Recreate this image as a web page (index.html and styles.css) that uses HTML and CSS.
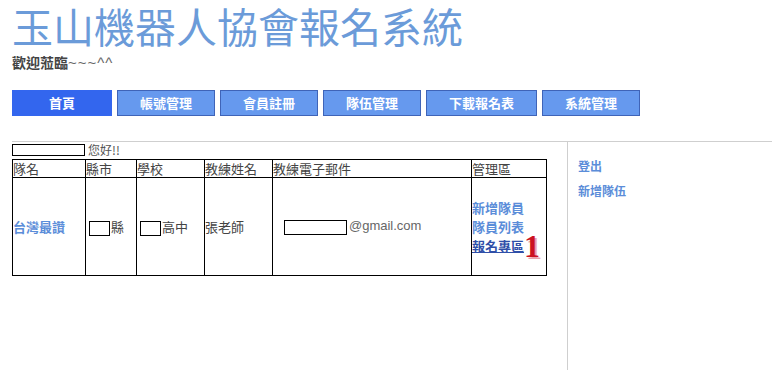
FILE: index.html
```html
<!DOCTYPE html>
<html lang="zh-Hant">
  <head>
    <meta charset="UTF-8" />
    <title>玉山機器人協會報名系統</title>
    <link rel="stylesheet" href="styles.css">
  </head>
  <body>
    <div class="page">
      <h1 class="site-title">玉山機器人協會報名系統</h1>
      <div class="welcome">歡迎蒞臨<span class="tail">~~~^^</span></div>

      <!-- 主選單 -->
      <div class="nav">
        <a class="nav-btn active" href="#">首頁</a>
        <a class="nav-btn" href="#">帳號管理</a>
        <a class="nav-btn" href="#">會員註冊</a>
        <a class="nav-btn" href="#">隊伍管理</a>
        <a class="nav-btn" href="#">下載報名表</a>
        <a class="nav-btn" href="#">系統管理</a>
      </div>

      <div class="content">
        <div class="main">
          <div class="hello"><span class="blank wide"></span>您好!!</div>
          <table class="teams">
            <colgroup>
              <col style="width: 73px" />
              <col style="width: 51px" />
              <col style="width: 68px" />
              <col style="width: 68px" />
              <col style="width: 199px" />
              <col style="width: 75px" />
            </colgroup>
            <tr>
              <th>隊名</th>
              <th>縣市</th>
              <th>學校</th>
              <th>教練姓名</th>
              <th>教練電子郵件</th>
              <th>管理區</th>
            </tr>
            <tr>
              <td class="team-name">台灣最讚</td>
              <td><span class="blank small"></span>縣</td>
              <td><span class="blank small"></span>高中</td>
              <td>張老師</td>
              <td class="email"><span class="blank mail"></span>@gmail.com</td>
              <td class="manage">
                <a href="#">新增隊員</a>
                <a href="#">隊員列表</a>
                <a href="#" class="signup">報名專區</a><span class="badge">1</span>
              </td>
            </tr>
          </table>
        </div>

        <div class="sidebar">
          <a href="#">登出</a>
          <a href="#">新增隊伍</a>
        </div>
      </div>
    </div>
  </body>
</html>
```

FILE: styles.css
```css
body {
  margin: 0;
  background: #fff;
  font-family: "Noto Sans CJK TC", "Liberation Sans", sans-serif;
  color: #333;
}
.page {
  width: 760px;
  padding: 0 10px 0 12px;
}
.site-title {
  margin: 0;
  font-size: 41px;
  line-height: 50px;
  font-weight: normal;
  color: #6b9bd9;
}
.welcome {
  font-size: 14px;
  line-height: 18px;
  font-weight: bold;
  color: #444;
  margin-top: 3px;
}
.welcome .tail {
  font-family: "Liberation Sans", sans-serif;
  font-weight: normal;
  font-size: 15px;
  letter-spacing: 1px;
  color: #666;
}
.nav {
  display: flex;
  gap: 5px;
  margin-top: 18px;
}
.nav-btn {
  display: block;
  height: 24px;
  line-height: 24px;
  padding: 0 22px;
  min-width: 52px;
  text-align: center;
  background: #6699ee;
  border: 1px solid #3f64b8;
  color: #fff;
  font-size: 13px;
  font-weight: bold;
  text-decoration: none;
}
.nav-btn.active {
  background: #3366ee;
  border-color: #3366ee;
  min-width: 54px;
}
.content {
  display: flex;
  margin-top: 25px;
  border-top: 1px solid #cfcfcf;
}
.main {
  width: 555px;
}
.hello {
  margin-top: 2px;
  font-size: 12px;
  line-height: 12px;
  color: #555;
}
.blank {
  display: inline-block;
  border: 1px solid #000;
  background: #fff;
  vertical-align: middle;
}
.blank.wide {
  width: 71px;
  height: 10px;
  margin-right: 3px;
  vertical-align: -1px;
}
.blank.small {
  width: 19px;
  height: 13px;
  margin: 0 1px 0 3px;
}
.blank.mail {
  width: 61px;
  height: 13px;
  margin: 0 2px 0 11px;
}
.teams {
  margin-top: 3px;
  border-collapse: collapse;
  table-layout: fixed;
  width: 534px;
  font-size: 13px;
  color: #444;
}
.teams th,
.teams td {
  border: 1px solid #000;
  padding: 0;
  text-align: left;
  vertical-align: middle;
}
.teams th {
  font-weight: normal;
  height: 17px;
  line-height: 17px;
}
.teams td {
  height: 97px;
}
.team-name {
  font-weight: bold;
  color: #5b8dd9;
  padding-left: 1px;
}
.email {
  font-family: "Liberation Sans", sans-serif;
  font-size: 13px;
  color: #666;
}
.manage a {
  display: inline-block;
  font-weight: bold;
  color: #5b8dd9;
  text-decoration: none;
  line-height: 16px;
}
.manage a.signup {
  color: #2f4fa8;
  text-decoration: underline;
}
.badge {
  display: inline-block;
  font-family: "Liberation Serif", serif;
  font-size: 32px;
  line-height: 16px;
  font-weight: bold;
  color: #cc1122;
  text-shadow: 2px 2px 0 #e9a3ae;
  vertical-align: -6px;
}
.sidebar {
  flex: 1;
  min-height: 224px;
  border-left: 1px solid #cfcfcf;
  padding: 16px 0 0 10px;
}
.sidebar a {
  display: block;
  font-size: 12px;
  font-weight: bold;
  color: #5b8dd9;
  text-decoration: none;
  line-height: 16px;
  margin-bottom: 9px;
}
```
